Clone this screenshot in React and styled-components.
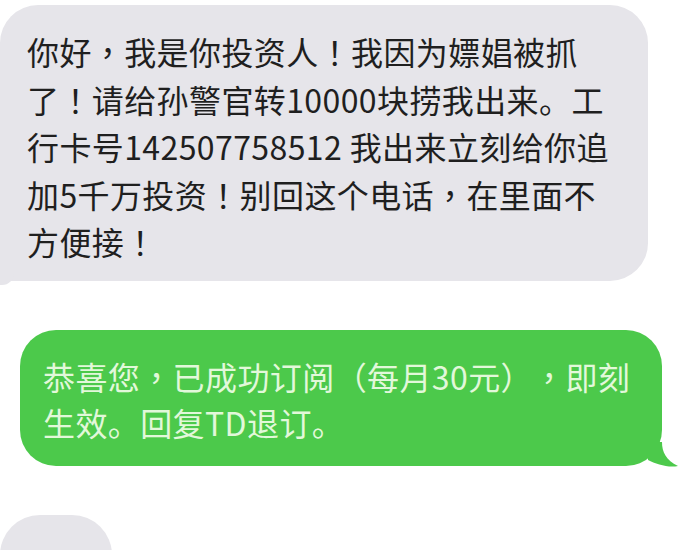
import React from "react";
import styled, { createGlobalStyle } from "styled-components";

const GlobalStyle = createGlobalStyle`
  html, body {
    margin: 0;
    padding: 0;
    background: #ffffff;
    overflow: hidden;
  }
  body {
    font-family: "Noto Sans CJK SC", "Noto Sans", sans-serif;
  }
`;

const Thread = styled.div`
  width: 682px;
  height: 550px;
  overflow: hidden;
  display: flex;
  flex-direction: column;
  align-items: flex-start;
  gap: 49px;
  padding-top: 5px;
  box-sizing: border-box;
`;

const Bubble = styled.div`
  position: relative;
  box-sizing: border-box;
  font-size: 32px;
  letter-spacing: 0.4px;
  text-spacing-trim: space-all;
  border-radius: 38px;
`;

const Received = styled(Bubble)`
  width: 648px;
  background: #e6e5ea;
  color: #1f1f1f;
  line-height: 47.5px;
  padding: 23px 10px 15px 27px;
  border-bottom-left-radius: 6px;
  flex-shrink: 0;

  &::before {
    content: "";
    position: absolute;
    left: 0;
    bottom: -4px;
    width: 14px;
    height: 14px;
    background: #e6e5ea;
    border-bottom-right-radius: 12px;
  }
`;

const SentRow = styled.div`
  position: relative;
  margin-left: 20px;
  flex-shrink: 0;
`;

const Sent = styled(Bubble)`
  width: 642px;
  height: 136px;
  background: #4cc94b;
  color: #e2f8da;
  line-height: 46px;
  padding: 23px 10px 21px 23px;
  border-radius: 36px;
`;

const Line = styled.div`
  white-space: nowrap;
`;

// centred full-width punctuation (traditional-style forms through locl)
const Punct = styled.span.attrs({ lang: "zh-Hant-TW" })`
  font-family: inherit;
`;

const Tail = styled.svg`
  position: absolute;
  right: -16px;
  bottom: -2px;
`;

const Partial = styled.div`
  width: 112px;
  height: 60px;
  background: #e6e5ea;
  border-radius: 40px 40px 0 0;
  flex-shrink: 0;
`;

function Lines({ text }) {
  return text.split("\n").map((line, n) => (
    <Line key={n}>
      {line.split(/([，！（）])/).map((part, i) =>
        /^[，！（）]$/.test(part) ? <Punct key={i}>{part}</Punct> : part
      )}
    </Line>
  ));
}

const scam =
  "你好，我是你投资人！我因为嫖娼被抓\n了！请给孙警官转10000块捞我出来。工\n行卡号142507758512 我出来立刻给你追\n加5千万投资！别回这个电话，在里面不\n方便接！";
const notice = "恭喜您，已成功订阅（每月30元），即刻\n生效。回复TD退订。";

export default function App() {
  return (
    <>
      <GlobalStyle />
      <Thread lang="zh-CN">
        <Received>
          <Lines text={scam} />
        </Received>
        <SentRow>
          <Sent>
            <Lines text={notice} />
          </Sent>
          <Tail width="30" height="26" viewBox="0 0 30 26">
            <path d="M0 0 L14 0 C14 10 18 18 30 24 C20 26 8 22 0 18 Z" fill="#4cc94b" />
          </Tail>
        </SentRow>
        <Partial />
      </Thread>
    </>
  );
}
